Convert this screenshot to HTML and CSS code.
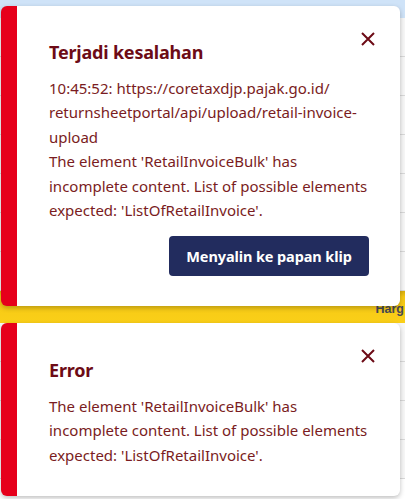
FILE: index.html
```
<!DOCTYPE html>
<html lang="id">
<head>
<meta charset="utf-8">
<title>Toasts</title>
<link rel="stylesheet" href="styles.css">
</head>
<body>
<div class="page">
  <div class="topbar"></div>
  <div class="rows">
    <div class="row"></div>
    <div class="row"></div>
    <div class="row"></div>
    <div class="row"></div>
    <div class="row"></div>
    <div class="row"></div>
    <div class="row"></div>
  </div>
  <div class="band"><span class="band-label">Harg</span></div>
  <div class="rows">
    <div class="row"></div>
    <div class="row"></div>
    <div class="row"></div>
    <div class="row"></div>
  </div>
</div>

<div class="toasts">
  <div class="toast toast-first">
    <button class="close" aria-label="Tutup">
      <svg width="14" height="14" viewBox="0 0 14 14"><path d="M1 1L13 13M13 1L1 13" stroke="#6d0b16" stroke-width="2" fill="none"/></svg>
    </button>
    <h2 class="title">Terjadi kesalahan</h2>
    <p class="msg">10:45:52: https://coretaxdjp.pajak.go.id/<br>returnsheetportal/api/upload/retail-invoice-<br>upload<br>The element 'RetailInvoiceBulk' has<br>incomplete content. List of possible elements<br>expected: 'ListOfRetailInvoice'.</p>
    <div class="actions"><button class="copy">Menyalin ke papan klip</button></div>
  </div>
  <div class="toast toast-second">
    <button class="close" aria-label="Tutup">
      <svg width="14" height="14" viewBox="0 0 14 14"><path d="M1 1L13 13M13 1L1 13" stroke="#6d0b16" stroke-width="2" fill="none"/></svg>
    </button>
    <h2 class="title">Error</h2>
    <p class="msg">The element 'RetailInvoiceBulk' has<br>incomplete content. List of possible elements<br>expected: 'ListOfRetailInvoice'.</p>
  </div>
</div>
</body>
</html>
```
FILE: styles.css
```
html, body {
  margin: 0;
  padding: 0;
}
body {
  width: 405px;
  height: 499px;
  overflow: hidden;
  position: relative;
  background: #ffffff;
  font-family: "Noto Sans", "Open Sans", sans-serif;
}
.page {
  display: flex;
  flex-direction: column;
}
.topbar {
  height: 18px;
  background: #cfe3f8;
}
.rows {
  display: flex;
  flex-direction: column;
}
.row {
  height: 38px;
  border-bottom: 1px solid #d9d9d9;
  background: #f7f7f7;
}
.band {
  height: 32px;
  background: linear-gradient(#d8ae0e 0, #f6c915 6px, #facf18 100%);
  display: flex;
  align-items: center;
  justify-content: flex-end;
  padding-top: 4px;
  padding-right: 1px;
  box-sizing: border-box;
}
.band-label {
  font-family: "Liberation Sans", Arial, sans-serif;
  font-weight: bold;
  font-size: 12.5px;
  color: #474a55;
}

.toasts {
  position: absolute;
  left: 1px;
  top: 6px;
  width: 399px;
  display: flex;
  flex-direction: column;
  gap: 17px;
}
.toast {
  position: relative;
  background: #ffffff;
  border-left: 16px solid #e6001b;
  border-radius: 6px;
  box-shadow: 0 2px 5px rgba(0, 0, 0, 0.25);
  padding: 34px 30px 31px 32px;
  color: #7a1c22;
}
.toast-first {
  height: 300px;
  box-sizing: border-box;
}
.toast-second {
  height: 173px;
  box-sizing: border-box;
  padding-top: 35px;
}
.close {
  position: absolute;
  top: 25px;
  right: 24px;
  width: 16px;
  height: 16px;
  padding: 0;
  border: 0;
  background: transparent;
  display: flex;
  align-items: center;
  justify-content: center;
}
.title {
  margin: 0;
  font-size: 18px;
  line-height: 24px;
  letter-spacing: -0.2px;
  font-weight: 700;
  color: #6d0b16;
}
.msg {
  margin: 12px 0 0;
  font-size: 15px;
  line-height: 24.4px;
  color: #7a1c22;
}
.actions {
  display: flex;
  justify-content: flex-end;
  margin-top: 14px;
}
.copy {
  height: 40px;
  width: 200px;
  margin-right: 1px;
  border: 0;
  border-radius: 4px;
  background: #222c5e;
  color: #ffffff;
  font-family: "Noto Sans", "Open Sans", sans-serif;
  font-weight: 700;
  font-size: 14.5px;
  letter-spacing: -0.1px;
}
```
